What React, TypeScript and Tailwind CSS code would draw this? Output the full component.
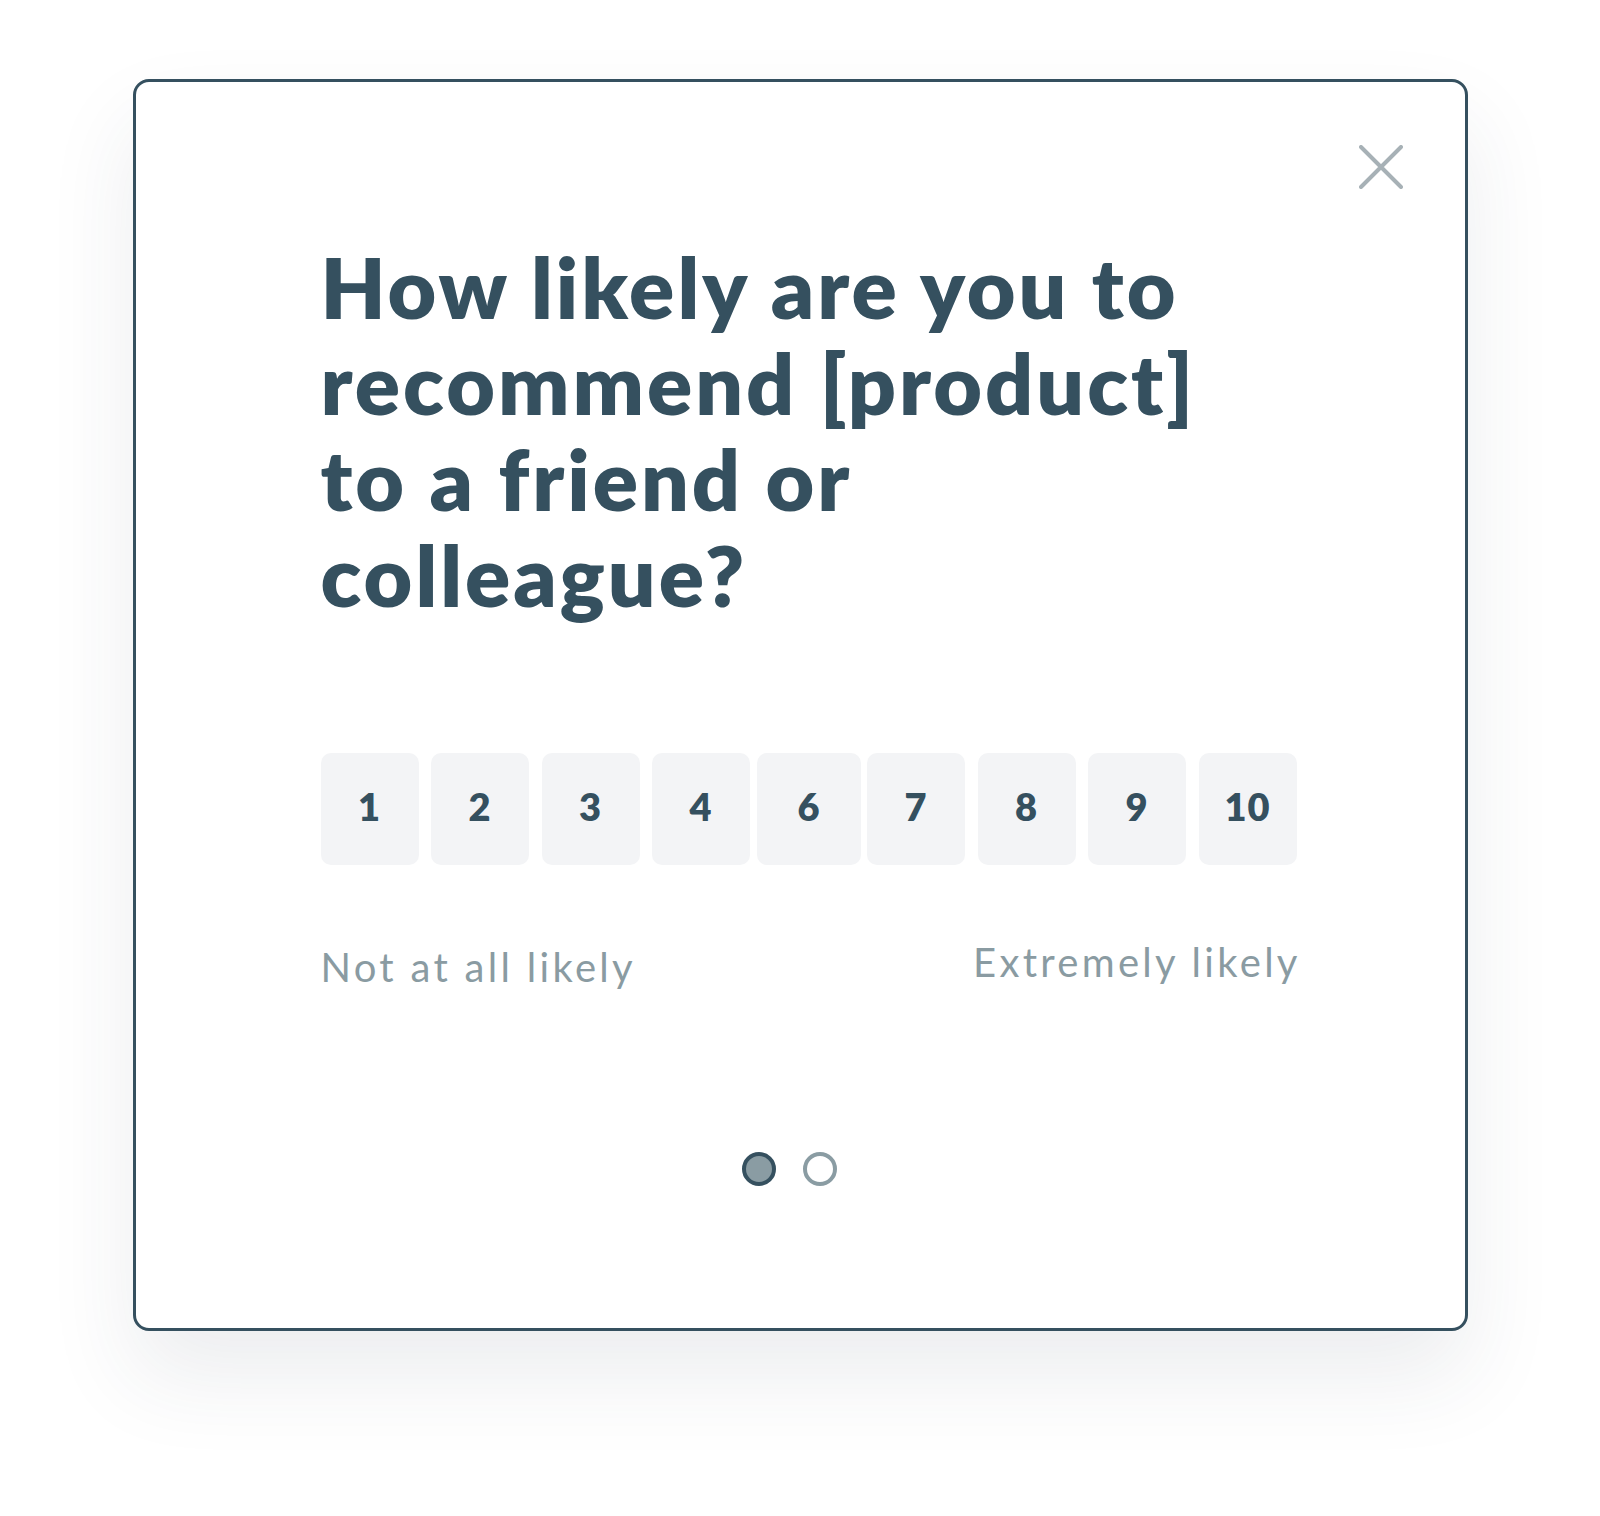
import React from 'react';

const scores = [
  { n: '1', cls: 'w-[98px]' },
  { n: '2', cls: 'w-[98px]' },
  { n: '3', cls: 'w-[98px]' },
  { n: '4', cls: 'w-[98px]' },
  { n: '6', cls: 'w-[104px] ml-[-5.5px] mr-[-6.5px]' },
  { n: '7', cls: 'w-[98px]' },
  { n: '8', cls: 'w-[98px]' },
  { n: '9', cls: 'w-[98px]' },
  { n: '10', cls: 'w-[98px]' },
];

const CloseIcon = () => (
  <svg width="44" height="44" viewBox="0 0 44 44" fill="none">
    <path d="M2 2L42 42M42 2L2 42" stroke="#a7b1b6" strokeWidth="4" strokeLinecap="round" />
  </svg>
);

const App = () => {
  return (
    <div className="min-h-[1516px] bg-white flex justify-center pt-[79px] font-['Lato','Liberation_Sans',sans-serif]">
      {/* Survey modal */}
      <div className="w-[1335px] h-[1252px] flex flex-col bg-white border-[3px] border-[#35505f] rounded-[16px] shadow-[0_45px_90px_rgba(40,60,80,0.09)]">
        <div className="flex justify-end pt-[63px] pr-[62px]">
          <CloseIcon />
        </div>

        <div className="pl-[185px] w-[1162px]">
          <h1 className="mt-[50px] text-[84px] leading-[96px] font-extrabold text-[#35505f] tracking-[3px]">
            How likely are you to
            <br />
            recommend [product]
            <br />
            to a friend or
            <br />
            colleague?
          </h1>

          {/* Score buttons */}
          <div className="mt-[130px] flex gap-[12.5px]">
            {scores.map((s) => (
              <div
                key={s.n}
                className={`${s.cls} h-[112px] shrink-0 rounded-[10px] bg-[#f3f4f6] flex items-center justify-center pb-[6px] text-[38px] font-extrabold text-[#35505f] tracking-[1px]`}
              >
                {s.n}
              </div>
            ))}
          </div>

          <div className="mt-[73px] w-[977px] flex justify-between items-start text-[40px] leading-[48px] font-normal tracking-[3.3px] text-[#8a9ba2]">
            <span className="pt-[5px]">Not at all likely</span>
            <span className="mr-[-3.3px]">Extremely likely</span>
          </div>
        </div>

        {/* Step dots */}
        <div className="mt-[161px] flex justify-center gap-[27px] pr-[22px]">
          <span className="w-[34px] h-[34px] rounded-full border-4 border-[#35505f] bg-[#8a9ca3]" />
          <span className="w-[34px] h-[34px] rounded-full border-4 border-[#8a9ca3] bg-white" />
        </div>
      </div>
    </div>
  );
};

export default App;
